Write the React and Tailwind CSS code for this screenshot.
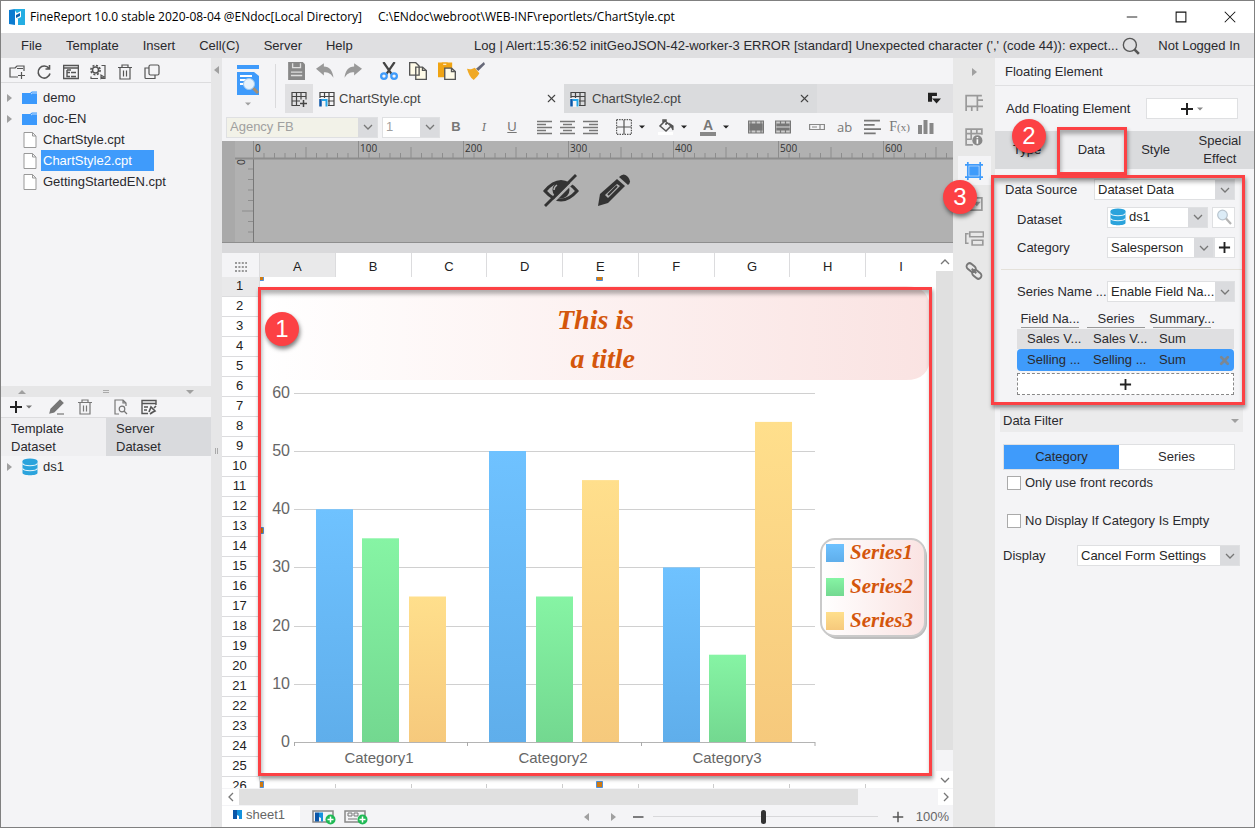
import React, { useState } from 'react';
import { FiX } from 'react-icons/fi';

const ROWS = Array.from({ length: 26 }, (_, i) => i + 1);
const COLUMNS = ['A', 'B', 'C', 'D', 'E', 'F', 'G', 'H', 'I'];
const MENU = ['File', 'Template', 'Insert', 'Cell(C)', 'Server', 'Help'];
const FILES = [
  { name: 'demo', folder: true },
  { name: 'doc-EN', folder: true },
  { name: 'ChartStyle.cpt' },
  { name: 'ChartStyle2.cpt' },
  { name: 'GettingStartedEN.cpt' },
];
const CHART = [
  { name: 'Category1', center: 119, tick: 35, bars: [[56, 40], [102, 35], [149, 25]] },
  { name: 'Category2', center: 293, tick: 208, bars: [[229, 50], [276, 25], [322, 45]] },
  { name: 'Category3', center: 467, tick: 382, bars: [[403, 30], [449, 15], [495, 55]] },
];
const SERIES = ['Series1', 'Series2', 'Series3'];
const FILLS = ['url(#blue)', 'url(#green)', 'url(#yellow)'];
const AXIS_Y = 465;

const Svg = ({ size = 16, className = '', children, ...rest }) => (
  <svg
    width={size}
    height={size}
    viewBox="0 0 16 16"
    fill="none"
    stroke="currentColor"
    strokeWidth="1.2"
    className={`shrink-0 ${className}`}
    {...rest}
  >
    {children}
  </svg>
);

const IconButton = ({ label, className = '', children }) => (
  <button type="button" aria-label={label} className={`flex shrink-0 items-center justify-center ${className}`}>
    {children}
  </button>
);

const Arrow = ({ dir = 'down', className = 'text-[#a0a0a0]' }) => {
  const paths = { down: 'M0 2h8L4 6z', up: 'M0 6h8L4 2z', right: 'M2 0v8L7 4z', left: 'M6 0v8L1 4z' };
  return (
    <svg width="8" height="8" viewBox="0 0 8 8" fill="currentColor" className={`shrink-0 ${className}`}>
      <path d={paths[dir]} />
    </svg>
  );
};

const Chevron = ({ dir = 'down' }) => {
  const paths = { down: 'M1 3l4 4 4-4', up: 'M1 7l4-4 4 4', left: 'M7 1L3 5l4 4', right: 'M3 1l4 4-4 4' };
  return (
    <svg width="10" height="10" viewBox="0 0 10 10" fill="none" stroke="#777" strokeWidth="1.3" className="shrink-0">
      <path d={paths[dir]} />
    </svg>
  );
};

const Plus = ({ size = 14 }) => (
  <svg width={size} height={size} viewBox="0 0 14 14" stroke="#222" strokeWidth="2" className="shrink-0">
    <path d="M7 1v12M1 7h12" />
  </svg>
);

const Database = () => (
  <svg width="16" height="18" viewBox="0 0 16 18" className="shrink-0">
    <path d="M0.500 3v12c0 3 15 3 15 0V3z" fill="#2ba3dc" />
    <ellipse cx="8" cy="3" rx="7.500" ry="2.600" fill="#2ba3dc" />
    <path d="M0.500 5.500c1 3 14 3 15 0M0.500 10.500c1 3 14 3 15 0" fill="none" stroke="#e6f5fb" strokeWidth="1.2" />
  </svg>
);

const Logo = ({ size = 18 }) => (
  <svg width={size} height={size} viewBox="0 0 18 18" className="shrink-0">
    <path d="M1 2l6-1v16l-6-1z" fill="#0b7bd0" />
    <path d="M6 1h11v16h-7v-6H7V9l3-2z" fill="#25aee3" />
    <path d="M7 6l6-3v6l-6 3z" fill="#fff" />
    <path d="M8 7l4-2v3l-4 2z" fill="#0d5fae" />
    <path d="M7 12l3-1v6H7z" fill="#fff" />
  </svg>
);

const SheetIcon = ({ plus }) => (
  <Svg stroke="#444">
    <path d="M1 1.500h14v13H1zM1 5.500h14M1 10h14M5.500 1.500v13M10 1.500v13" />
    {plus ? (
      <>
        <path d="M9 8.500h7v7.500H9z" fill="#e0e0e2" stroke="none" />
        <path d="M12.500 9v7M9 12.500h7" strokeWidth="1.5" />
      </>
    ) : (
      <>
        <path d="M0 7h9v9H0z" fill="#f4f4f6" stroke="none" />
        <path d="M1.500 8v7.500" stroke="#0a56a8" strokeWidth="2.500" />
        <path d="M3 9h4.500v6.500" stroke="#25a6e8" strokeWidth="2" />
      </>
    )}
  </Svg>
);

const MagnifierIcon = ({ size = 16, lens = '#dcecf7' }) => (
  <Svg size={size}>
    <circle cx="6.500" cy="6" r="4.800" fill={lens} stroke="#b8c4ce" />
    <path d="M10 9.500l5 5.500" stroke="#b4b4b4" strokeWidth="2.200" />
  </Svg>
);

const Select = ({ id, value, className = '', textClass = 'bg-white text-[#262626]', icon }) => (
  <div className={`flex h-[21px] min-w-0 border border-[#dfe0e2] ${className}`}>
    <div className={`flex min-w-0 flex-1 items-center ${textClass}`}>
      {icon}
      <select id={id} aria-label={id} className="h-full w-full min-w-0 appearance-none bg-transparent pl-[3px] outline-none">
        <option>{value}</option>
      </select>
    </div>
    <span className="flex w-[19px] shrink-0 items-center justify-center bg-[#dadbde]">
      <Chevron />
    </span>
  </div>
);

const Badge = ({ n, className }) => (
  <span
    className={`absolute z-20 flex h-[34px] w-[34px] items-center justify-center rounded-full bg-[#fc4144] text-2xl text-white shadow-[1px_3px_4px_rgba(0,0,0,0.5)] ${className}`}
  >
    {n}
  </span>
);

const Callout = ({ className }) => (
  <span
    className={`pointer-events-none absolute z-10 border-[3px] border-[#fc4144] shadow-[1px_3px_4px_rgba(0,0,0,0.4),inset_1px_4px_4px_rgba(0,0,0,0.3)] ${className}`}
  />
);

const Separator = () => <span className="h-4 w-px shrink-0 bg-[#d8d8da]" />;

const TitleBar = () => (
  <header className="flex h-8 shrink-0 items-center bg-white pl-[7px] text-black">
    <Logo />
    <h1 className="ml-1 font-['Open_Sans',sans-serif] text-[12px] whitespace-nowrap">
      FineReport 10.0 stable 2020-08-04 @ENdoc[Local Directory]
    </h1>
    <span className="ml-4 font-['Open_Sans',sans-serif] text-[12px] whitespace-nowrap">
      C:\ENdoc\webroot\WEB-INF\reportlets/ChartStyle.cpt
    </span>
    <div className="ml-auto flex h-full">
      <IconButton label="Minimize" className="w-[49px]">
        <Svg size={12} stroke="#111"><path d="M1 8h14" /></Svg>
      </IconButton>
      <IconButton label="Maximize" className="w-[49px]">
        <Svg size={12} stroke="#111" strokeWidth="1.400"><path d="M1.500 1.500h13v13h-13z" /></Svg>
      </IconButton>
      <IconButton label="Close" className="w-[49px]">
        <Svg size={12} stroke="#111" strokeWidth="1.400"><path d="M1 1l14 14M15 1L1 15" /></Svg>
      </IconButton>
    </div>
  </header>
);

const MenuBar = () => (
  <nav className="flex h-[25px] shrink-0 items-center bg-[#dfdfe1] pr-3.5 pl-5">
    <div className="flex gap-6">
      {MENU.map((item) => (
        <button type="button" key={item}>{item}</button>
      ))}
    </div>
    <span className="ml-auto whitespace-nowrap">
      Log | Alert:15:36:52 initGeoJSON-42-worker-3 ERROR [standard] Unexpected character (',' (code 44)): expect...
    </span>
    <IconButton label="Search" className="ml-1 w-[18px]">
      <Svg size={18} stroke="#555"><circle cx="7" cy="7" r="5.800" /><path d="M11 11l4 4" strokeWidth="2.400" /></Svg>
    </IconButton>
    <button type="button" className="ml-[18px] whitespace-nowrap">Not Logged In</button>
  </nav>
);

const LeftPanel = () => {
  const [selected, setSelected] = useState('ChartStyle2.cpt');

  return (
    <aside className="flex w-[210px] shrink-0 flex-col bg-[#f4f4f6]">
      <div className="flex h-[25px] shrink-0 items-center gap-[11px] border-b border-[#dcdcde] pt-1 pl-2 text-[#555]">
        <IconButton label="New folder">
          <Svg><path d="M9 13H1V4h5M6 4l2-2h7v5M8 4.500h6M12.500 8v7M9 11.500h7" /></Svg>
        </IconButton>
        <IconButton label="Refresh">
          <Svg><path d="M13 4.500A6 6 0 1 0 14 9.500M13.500 1v4h-4" strokeWidth="1.600" /></Svg>
        </IconButton>
        <IconButton label="Locate">
          <Svg><path d="M.6 1.500h14.800v13H.6zM.6 4h14.800M4 6v6.500h3M4 8.500h3M8 8.500h5M8 12.500h5M4 6h4" strokeWidth="1.400" /></Svg>
        </IconButton>
        <IconButton label="Configure">
          <Svg>
            <circle cx="5.500" cy="6" r="4.600" strokeWidth="1.600" strokeDasharray="2 1.600" />
            <circle cx="5.500" cy="6" r="3" strokeWidth="1.500" />
            <path d="M11.500 1.500h3.500v13h-3.500M1 12.500v2h7M11 11v3.500l3-1.500z" />
          </Svg>
        </IconButton>
        <IconButton label="Delete">
          <Svg><path d="M1 3.500h14M5 3V1h6v2M3 4v11h10V4M6.500 6.500v6M9.500 6.500v6" /></Svg>
        </IconButton>
        <IconButton label="Copy">
          <Svg><rect x="5" y="1" width="10" height="10" rx="1.500" /><path d="M5 4H1v9.500q0 1 1 1h9v-3.500" /></Svg>
        </IconButton>
      </div>
      <ul className="flex flex-1 flex-col pt-1">
        {FILES.map((file) => (
          <li key={file.name} className="flex h-[21px] items-center">
            <span className="flex w-[21px] pl-1">{file.folder && <Arrow dir="right" />}</span>
            {file.folder ? (
              <Svg stroke="none" fill="#3b99fc"><path d="M0 3h8l2-1.500h5v12.500H0z" /><path d="M9 4l1.500-1H15" stroke="#fff" strokeWidth=".7" fill="none" /></Svg>
            ) : (
              <Svg stroke="#999" fill="#fff" strokeWidth="1"><path d="M2 .5h8.500L14 4v11.500H2zM10.500.5V4H14" /></Svg>
            )}
            <button
              type="button"
              onClick={() => setSelected(file.name)}
              className={`ml-[3px] h-full pl-[2px] text-left ${selected === file.name ? 'w-[113px] bg-[#3f9bfb] text-white' : ''}`}
            >
              {file.name}
            </button>
          </li>
        ))}
      </ul>
      <div className="flex h-[11px] shrink-0 items-center justify-between bg-[#e6e6e7] px-[17px]">
        <Arrow dir="up" />
        <span className="h-[3px] w-1.5 border-y border-[#aaa]" />
        <Arrow />
      </div>
      <div className="flex h-[21px] shrink-0 items-center border-b border-[#dcdcde] pl-2 text-[#777]">
        <IconButton label="Add dataset"><Plus /><Arrow className="ml-0.5 scale-75 text-[#777]" /></IconButton>
        <span className="mx-2"><Separator /></span>
        <IconButton label="Edit dataset">
          <Svg><path d="M1 14l1-4L11 1l3 3-9 9z" fill="currentColor" /><path d="M8 15h7" /></Svg>
        </IconButton>
        <IconButton label="Delete dataset" className="ml-3">
          <Svg><path d="M1 3.500h14M5 3V1h6v2M3 4v11h10V4M6.500 6.500v6M9.500 6.500v6" /></Svg>
        </IconButton>
        <span className="mx-2.5"><Separator /></span>
        <IconButton label="Preview dataset">
          <Svg><path d="M6 15H2V1h8l3 3v3M10 1v3h3" /><circle cx="9" cy="10" r="2.800" /><path d="M11 12l3 3" /></Svg>
        </IconButton>
        <IconButton label="Connections" className="ml-3 text-[#555]">
          <Svg><path d="M7 14.500H1v-13h14V6M1 4.500h14M3 8h4M3 11h3" strokeWidth="1.400" /><path d="M8 13l2-5 4 4-4 2M13 9l2-2M9 15l3-2" strokeWidth="1.600" /></Svg>
        </IconButton>
      </div>
      <div className="grid h-[38px] shrink-0 grid-cols-2 text-left leading-[18px]">
        <button type="button" className="bg-[#efeff1] pt-0.5 pl-2.5 text-left">Template<br />Dataset</button>
        <button type="button" className="bg-[#d9dadd] pt-0.5 pl-2.5 text-left">Server<br />Dataset</button>
      </div>
      <div className="flex h-[371px] shrink-0">
        <div className="flex h-[21px] items-center">
          <span className="flex w-[21px] pl-1"><Arrow dir="right" /></span>
          <Database />
          <span className="ml-[5px]">ds1</span>
        </div>
      </div>
    </aside>
  );
};

const Toolbar = () => (
  <div className="flex h-[55px] shrink-0 bg-[#f4f4f6]">
    <div className="flex w-[63px] shrink-0 items-center pl-[13px]">
      <IconButton label="Preview" className="flex-col gap-1">
        <svg width="26" height="32" viewBox="0 0 26 32">
          <path d="M2 1h22v4H2zM2 8h17l5 4v19H2z" fill="#3f9bfb" />
          <path d="M5 12h12M5 16h8M5 20h5" stroke="#fff" strokeWidth="2" />
          <path d="M18 24l5 5" stroke="#a98f70" strokeWidth="3" />
          <circle cx="14" cy="20" r="5.500" fill="#e7f2fb" stroke="#a4cbee" />
        </svg>
        <Arrow className="scale-75 text-[#a0a0a0]" />
      </IconButton>
      <span className="ml-3.5 h-11 w-px bg-[#dadadc]" />
    </div>
    <div className="flex min-w-0 flex-1 flex-col">
      <div className="flex h-[26px] items-center pl-0.5">
        <IconButton label="Save" className="text-[#888]">
          <Svg size={18} stroke="none" fill="currentColor"><path d="M1 0h13l2 2v14H1z" /><path d="M5 1v4h7V1M3.500 9h10M3.500 12h10" stroke="#ddd" fill="none" /></Svg>
        </IconButton>
        <IconButton label="Undo" className="ml-[11px] text-[#999]">
          <Svg size={18} stroke="none" fill="currentColor"><path d="M0 6l7-5v3c5 0 8 4 8.500 10C13 10 11 9 7 9v3z" /></Svg>
        </IconButton>
        <IconButton label="Redo" className="ml-2.5 text-[#999]">
          <Svg size={18} stroke="none" fill="currentColor"><path d="M16 6L9 1v3C4 4 1 8 .5 14 3 10 5 9 9 9v3z" /></Svg>
        </IconButton>
        <span className="mx-[9px]"><Separator /></span>
        <IconButton label="Cut">
          <Svg size={18} stroke="#444"><path d="M3 0l7.500 11M13 0L5.500 11" strokeWidth="2" /><circle cx="3.500" cy="12.500" r="2.500" stroke="#3f9bfb" strokeWidth="2" /><circle cx="12.500" cy="12.500" r="2.500" stroke="#3f9bfb" strokeWidth="2" /></Svg>
        </IconButton>
        <IconButton label="Copy" className="ml-[11px]">
          <Svg size={18} stroke="#555" fill="#fffbe8"><path d="M.6.6H6l3 3v8H.6zM6 4.500h6l3.400 3v8H6z" /><path d="M12 4.500v3h3" fill="none" /></Svg>
        </IconButton>
        <IconButton label="Paste" className="ml-[11px]">
          <Svg size={18} stroke="#f0a413"><path d="M0 1h12v12H0z" fill="#f0a413" /><path d="M4 1h4v2H4z" fill="#fff" /><path d="M6 5.500h6l3.400 3v7H6z" fill="#fffbe8" stroke="#555" /><path d="M12 5.500v3h3" stroke="#555" /></Svg>
        </IconButton>
        <IconButton label="Format painter" className="ml-[11px]">
          <Svg size={18} stroke="none"><path d="M15 0l1 2-6 6-2-2z" fill="#666878" /><path d="M0 6c3 1 5 0 7-1l4 5c-1 2-3 4-5 6C3 14 1 10 0 6z" fill="#f0a925" /></Svg>
        </IconButton>
        <span className="mx-[9px]"><Separator /></span>
      </div>
      <div className="flex h-[29px] bg-[#e0e0e2]">
        <IconButton label="New template" className="w-7"><SheetIcon plus /></IconButton>
        <div className="flex min-w-0 flex-[239] items-center bg-[#f4f4f6] pr-1.5 pl-1.5 text-[#444]">
          <SheetIcon />
          <button type="button" className="ml-1">ChartStyle.cpt</button>
          <IconButton label="Close tab" className="ml-auto"><FiX size={13} /></IconButton>
        </div>
        <div className="flex min-w-0 flex-[241] items-center bg-[#dadbdd] pr-1.5 pl-1.5 text-[#444]">
          <SheetIcon />
          <button type="button" className="ml-1.5">ChartStyle2.cpt</button>
          <IconButton label="Close tab" className="ml-auto"><FiX size={13} /></IconButton>
        </div>
        <div className="flex flex-[124] items-center justify-end pr-3">
          <IconButton label="Tab list">
            <Svg size={13} stroke="none" fill="#222"><path d="M0 1h11v4H5v7H0zM5 8h11l-5.500 6z" /></Svg>
          </IconButton>
        </div>
      </div>
    </div>
  </div>
);

const Align = ({ d }) => <Svg stroke="#777" strokeWidth="1.500"><path d={d} /></Svg>;

const FormatBar = () => (
  <div className="flex h-7 shrink-0 items-center bg-[#f4f4f6] pl-1 text-[#777]">
    <Select id="Font" value="Agency FB" textClass="bg-[#f2f2e8] text-[#a0a0a0]" className="w-[152px]" />
    <Select id="Size" value="1" textClass="bg-white text-[#a0a0a0]" className="ml-1 w-[58px]" />
    <IconButton label="Bold" className="ml-2 w-4 font-bold">B</IconButton>
    <IconButton label="Italic" className="ml-3 w-4 font-serif italic">I</IconButton>
    <IconButton label="Underline" className="ml-3 w-4 underline">U</IconButton>
    <span className="ml-2"><Separator /></span>
    <div className="ml-[9px] flex gap-[7px]">
      <IconButton label="Align left"><Align d="M0 2.500h15M0 5.500h9M0 8.500h15M0 11.500h9M0 14.500h15" /></IconButton>
      <IconButton label="Align center"><Align d="M0 2.500h15M3 5.500h9M0 8.500h15M3 11.500h9M0 14.500h15" /></IconButton>
      <IconButton label="Align right"><Align d="M0 2.500h15M6 5.500h9M0 8.500h15M6 11.500h9M0 14.500h15" /></IconButton>
    </div>
    <span className="ml-[9px]"><Separator /></span>
    <IconButton label="Border" className="ml-2 gap-1.5">
      <Svg stroke="#555"><path d="M.6.6h14.800v14.800H.6z" strokeDasharray="1.500 1" /><path d="M8 1v14M1 8h14" /></Svg>
      <Arrow className="scale-75 text-[#222]" />
    </IconButton>
    <IconButton label="Fill colour" className="ml-3 gap-1.5">
      <Svg stroke="#555"><path d="M0 13h15v3H0z" fill="#fff" stroke="none" /><path d="M7 2l6 5-5 5-6-5zM5 4V1h3v5" strokeWidth="1.500" /><path d="M12 5l3 2v4z" fill="#444" /></Svg>
      <Arrow className="scale-75 text-[#222]" />
    </IconButton>
    <IconButton label="Text colour" className="ml-3 gap-1.5">
      <span className="w-4 border-b-4 border-[#888] text-center text-sm leading-[13px] font-bold">A</span>
      <Arrow className="scale-75 text-[#222]" />
    </IconButton>
    <span className="ml-2.5"><Separator /></span>
    <IconButton label="Merge cells" className="ml-2">
      <Svg><path d="M.6 2h14.800v12H.6z" fill="#ccc" /><path d="M2 5h12v6H2z" fill="#777" /><path d="M8 2v3M8 11v3M3 2v12M13 2v12" /></Svg>
    </IconButton>
    <IconButton label="Split cells" className="ml-[11px]">
      <Svg><path d="M.6 2h14.800v12H.6z" fill="#ccc" /><path d="M2 5h12v6H2z" fill="#777" /><path d="M5.500 2v12M10.500 2v12" /><path d="M1 8h14" stroke="#ccc" /></Svg>
    </IconButton>
    <span className="ml-2"><Separator /></span>
    <IconButton label="Widget" className="ml-2.5"><Svg stroke="#888"><path d="M.6 5.500h14.800v5H.6zM3 8h5M11 6v4" /></Svg></IconButton>
    <button type="button" className="ml-3 font-['Open_Sans',sans-serif] text-[13px]">ab</button>
    <IconButton label="Rich text" className="ml-3"><Svg size={17} strokeWidth="1.500"><path d="M0 1.500h15M0 5.500h10M0 9.500h16M0 13.500h11" /></Svg></IconButton>
    <button type="button" className="ml-2 font-['Liberation_Serif',serif] text-sm">F<span className="text-[11px]">(x)</span></button>
    <IconButton label="Chart" className="ml-2"><Svg stroke="none" fill="#888"><path d="M0 6h4v9H0zM5.500 1h4v14h-4zM11.500 4h4v11h-4z" /></Svg></IconButton>
  </div>
);

const Ruler = () => (
  <section className="relative h-[102px] shrink-0 overflow-hidden border-b border-[#8e8e8e] bg-[#b1b1b1]">
    <svg className="h-full w-full" stroke="#8d8d8d">
      <rect width="13" height="102" fill="#a9a9a9" stroke="none" />
      <path d="M31.500 0v102" stroke="#777" />
      <path d="M31 17.500h1300M13 17.500h18" strokeWidth="2" />
      {Array.from({ length: 70 }, (_, i) => {
        const x = 31.5 + i * 10.5;
        const height = i % 10 === 0 ? 17 : i % 5 === 0 ? 11 : 5;
        return <path key={i} d={`M${x} ${17 - height}V17`} />;
      })}
      {[1, 2, 3, 4, 5, 6, 7].map((i) => (
        <path key={i} d={`M${i === 5 ? 20 : 26} ${17.5 + i * 10.5}H31`} />
      ))}
      <g fill="#333" stroke="none" className="font-['Open_Sans',sans-serif] text-[10px]">
        {[0, 1, 2, 3, 4, 5, 6].map((i) => (
          <text key={i} x={33 + i * 105} y="11">{i * 100}</text>
        ))}
        <text transform="rotate(-90)" x="-24" y="23">0</text>
      </g>
    </svg>
    <div className="absolute top-8 left-[321px] flex gap-4">
      <IconButton label="Hide">
        <svg width="36" height="36" viewBox="0 0 36 36" fill="none" stroke="#333">
          <path d="M2 18Q18 -1 34 18Q18 36 2 18z" strokeWidth="3" />
          <circle cx="18" cy="17" r="8.500" fill="#333" stroke="none" />
          <path d="M11 17q0-3 3-5" stroke="#b1b1b1" strokeWidth="1.500" />
          <path d="M5 34L35 4" stroke="#b1b1b1" strokeWidth="2.500" />
          <path d="M2 33L33 2" strokeWidth="2.800" />
        </svg>
      </IconButton>
      <IconButton label="Edit">
        <svg width="36" height="36" viewBox="0 0 36 36">
          <path d="M3 33l2-12L22 6l8 7-17 17z" fill="#333" />
          <path d="M10 22L22 11l3 2-12 12z" fill="#b1b1b1" />
          <path d="M13 22l9-9" stroke="#333" strokeWidth="2" />
          <path d="M24 4q5-5 9 0t0 8z" fill="#333" />
        </svg>
      </IconButton>
    </div>
  </section>
);

const Gradient = ({ id, from, to, flat }) => (
  <linearGradient id={id} x2={flat ? 1 : 0} y2={flat ? 0 : 1}>
    <stop stopColor={from} />
    <stop offset="1" stopColor={to} />
  </linearGradient>
);

const Chart = () => (
  <svg viewBox="0 0 676 511" preserveAspectRatio="xMinYMin" className="h-full w-full">
    <defs>
      <Gradient id="blue" from="#6fc2ff" to="#5faeeb" />
      <Gradient id="green" from="#86f4a4" to="#73d890" />
      <Gradient id="yellow" from="#ffdf8c" to="#f6c97c" />
      <Gradient id="pink" from="#ffffff" to="#fae3e2" flat />
    </defs>
    <path d="M0 9H646q24 0 24 24V79q0 24-24 24H0z" fill="url(#pink)" />
    <g className="font-['Liberation_Serif',serif] text-[28px] font-bold italic" fill="#d4560c" textAnchor="end">
      <text x="374" y="52">This is</text>
      <text x="375" y="91">a title</text>
    </g>
    {[0, 10, 20, 30, 40, 50, 60].map((v) => {
      const y = Math.round(AXIS_Y - v * 5.82);
      return (
        <g key={v}>
          <path d={`M34 ${y + 0.5}H555`} stroke={v ? '#d0d0d0' : '#b4b4b4'} />
          <text x="30" y={y + 5} textAnchor="end" fill="#666" className="text-[16px]">{v}</text>
        </g>
      );
    })}
    {CHART.map((cat) => (
      <g key={cat.name}>
        <path d={`M${cat.tick - 0.5} ${AXIS_Y}v4`} stroke="#aaa" />
        {cat.bars.map(([x, value], i) => (
          <rect key={x} x={x} y={AXIS_Y - value * 5.82} width="37" height={value * 5.82} fill={FILLS[i]} />
        ))}
        <text x={cat.center} y="486" textAnchor="middle" fill="#666" className="text-[15px]">{cat.name}</text>
      </g>
    ))}
    <path d={`M555 ${AXIS_Y}v4`} stroke="#aaa" />
    <rect x="562" y="263" width="105" height="99" rx="16" fill="#bdbdbd" />
    <rect x="561" y="262" width="104" height="97" rx="14" fill="url(#pink)" stroke="#cacaca" strokeWidth="2" />
    {SERIES.map((name, i) => (
      <g key={name}>
        <rect x="566" y={267 + i * 34} width="18" height="18" fill={FILLS[i]} />
        <text x="590" y={282 + i * 34} fill="#d4560c" className="font-['Liberation_Serif',serif] text-[21px] font-bold italic">{name}</text>
      </g>
    ))}
    <path d="M75.500 507v4M151.500 507v4M226.500 507v4M302.500 507v4M378.500 507v4M453.500 507v4M529.500 507v4M605.500 507v4" stroke="#ccc" />
    <g fill="#cf7a12" stroke="#4f90dc">
      <path d="M-2 -1h5.500v4.500h-5.500zM336.500 -.5h6v4h-6zM-2 250.500h5.500v6h-5.500zM-2 504.500h5.500v6h-5.500zM336.500 504.500h6v6h-6z" />
    </g>
  </svg>
);

const Sheet = () => (
  <section className="flex min-h-0 flex-1 bg-white">
    <div className="flex min-w-0 flex-1 flex-col">
      <div className="flex h-6 shrink-0 text-[#222]">
        <div className="flex w-[38px] shrink-0 items-center justify-center border-r border-[#dcdcde] bg-[#f4f4f6] pt-1">
          <svg width="12" height="10" viewBox="0 0 12 10" stroke="#999" strokeWidth="2" strokeDasharray="2 1.400">
            <path d="M0 1h12M0 5h12M0 9h12" />
          </svg>
        </div>
        {COLUMNS.map((c) => (
          <div
            key={c}
            className={`flex items-center justify-center pt-1 ${c === 'I' ? 'flex-[71]' : 'flex-[76] border-r border-[#dcdcde]'} ${c === 'A' ? 'bg-[#e9e9ea]' : ''}`}
          >
            {c}
          </div>
        ))}
      </div>
      <div className="flex min-h-0 flex-1">
        <div className="w-[38px] shrink-0 overflow-hidden">
          {ROWS.map((r) => (
            <div key={r} className={`h-5 border-r border-b border-[#dcdcde] pr-0.5 text-center leading-[18px] text-[#222] ${r === 1 ? 'bg-[#e9e9ea]' : ''}`}>
              {r}
            </div>
          ))}
        </div>
        <div className="relative min-w-0 flex-1">
          <Chart />
          <Callout className="top-2.5 right-1 bottom-3 -left-0.5" />
          <Badge n="1" className="top-[35px] left-[5px]" />
        </div>
      </div>
    </div>
    <div className="flex w-[17px] shrink-0 flex-col bg-[#f4f4f6]">
      <IconButton label="Scroll up" className="h-[18px] bg-white"><Chevron dir="up" /></IconButton>
      <div className="flex-[480] bg-[#e0e0e0]" />
      <div className="flex-[21]" />
      <IconButton label="Scroll down" className="h-[17px] bg-white"><Chevron /></IconButton>
    </div>
  </section>
);

const AddSheetIcon = ({ logo }) => (
  <svg width="24" height="16" viewBox="0 0 24 16" className="shrink-0">
    <path d="M1 2h20v11H1z" fill="#f4f4f6" stroke="#888" strokeWidth="1.500" />
    {logo ? (
      <>
        <path d="M3 3.500h4v9H3z" fill="#0b56a8" />
        <path d="M7 3.500h4v9H9V9L7 8z" fill="#1592dd" />
      </>
    ) : (
      <path d="M4 4h4v3H4zM10 4h4v3h-4zM4 10h9" fill="none" stroke="#777" />
    )}
    <circle cx="18.500" cy="10.500" r="5" fill="#1fb954" />
    <path d="M18.500 7.500v6M15.500 10.500h6" stroke="#fff" strokeWidth="1.500" />
  </svg>
);

const SheetFooter = () => {
  const [zoom, setZoom] = useState(100);

  return (
    <footer className="shrink-0 bg-[#f4f4f6]">
      <div className="flex h-[18px] border-y border-[#f4f4f6]">
        <IconButton label="Scroll left" className="w-[17px] bg-white"><Chevron dir="left" /></IconButton>
        <div className="flex-[619] bg-[#e0e0e0]" />
        <div className="flex-[80]" />
        <IconButton label="Scroll right" className="w-[15px] bg-white"><Chevron dir="right" /></IconButton>
      </div>
      <div className="flex h-[21px] items-center text-[#666]">
        <button type="button" className="flex h-full w-[78px] items-center gap-1 bg-white pb-1 pl-[11px]">
          <svg width="9" height="9" viewBox="0 0 9 9">
            <path d="M0 0h4v9H0z" fill="#0b56a8" />
            <path d="M4 0h5v9H6V6L4 5z" fill="#1592dd" />
          </svg>
          sheet1
        </button>
        <IconButton label="Add sheet" className="ml-3"><AddSheetIcon logo /></IconButton>
        <IconButton label="Add form sheet" className="ml-2"><AddSheetIcon /></IconButton>
        <IconButton label="Previous sheet" className="ml-auto"><Arrow dir="left" /></IconButton>
        <IconButton label="Next sheet" className="ml-[18px]"><Arrow dir="right" /></IconButton>
        <IconButton label="Zoom out" className="ml-4">
          <Svg size={12} stroke="#555" strokeWidth="2"><path d="M0 8h14" /></Svg>
        </IconButton>
        <input
          type="range"
          aria-label="Zoom"
          min="2"
          max="202"
          value={zoom}
          onChange={(e) => setZoom(Number(e.target.value))}
          className="mx-2 h-3.5 w-[225px] appearance-none bg-[linear-gradient(#d8d8da,#d8d8da)] bg-[length:100%_1px] bg-center bg-no-repeat [&::-webkit-slider-thumb]:h-3.5 [&::-webkit-slider-thumb]:w-[5px] [&::-webkit-slider-thumb]:appearance-none [&::-webkit-slider-thumb]:rounded-full [&::-webkit-slider-thumb]:bg-[#333]"
        />
        <IconButton label="Zoom in" className="ml-1.5">
          <Svg size={12} stroke="#555" strokeWidth="2"><path d="M1 8h14M8 1v14" /></Svg>
        </IconButton>
        <span className="mr-1 ml-3">{zoom}%</span>
      </div>
    </footer>
  );
};

const Rail = () => (
  <nav className="relative flex w-[42px] shrink-0 flex-col items-center bg-[#e8e8e8] text-[#999]">
    <IconButton label="Collapse panel" className="h-[27px]"><Arrow dir="right" /></IconButton>
    <IconButton label="Cell element" className="h-9 w-[33px]">
      <Svg size={18} strokeWidth="1.500"><path d="M15 1.500H1V11h6M11 1v14M11 5.500h5M7 11h9M6 11v4M1 11v4" /></Svg>
    </IconButton>
    <IconButton label="Cell attributes" className="h-8 w-[33px]">
      <Svg size={18} strokeWidth="1.500"><path d="M7 15H1V1h14v5M1 5h14M1 10h5M5.500 1v9M10.500 1v4" /><circle cx="11" cy="11" r="4.500" fill="#888" stroke="none" /><path d="M11 10v4M11 8v1" stroke="#fff" /></Svg>
    </IconButton>
    <IconButton label="Floating element" className="mt-[3px] h-[29px] w-[33px] bg-[#f4f4f6] text-[#3f9bfb]">
      <Svg size={18} strokeWidth="1.500"><path d="M0 2.500h16M0 13.500h16M2.500 0v16M13.500 0v16" /><path d="M4.500 4.500h7v7h-7z" fill="currentColor" /></Svg>
    </IconButton>
    <IconButton label="Widget settings" className="h-[38px] w-[33px]">
      <Svg size={18} strokeWidth="1.500"><path d="M1 2.500h14v11H1z" /><path d="M7 6h7l-3.500 4z" fill="currentColor" stroke="none" /></Svg>
    </IconButton>
    <IconButton label="Conditional attributes" className="h-[30px] w-[33px]">
      <Svg size={19} strokeWidth="1.400"><path d="M3 4H.6v8H3M4 2.500h11.500v4H4zM6 9.500h9v4H6z" /></Svg>
    </IconButton>
    <IconButton label="Hyperlink" className="h-9 w-[33px] text-[#777]">
      <Svg size={18} strokeWidth="1.700">
        <rect x="-4.500" y="-2.700" width="9" height="5.400" rx="2.700" transform="translate(5.500 5) rotate(40)" />
        <rect x="-4.500" y="-2.700" width="9" height="5.400" rx="2.700" transform="translate(10.500 11) rotate(40)" />
        <path d="M6 6l4 4" />
      </Svg>
    </IconButton>
    <Badge n="3" className="top-[122px] -left-2.5" />
  </nav>
);

const Cells = ({ values, action }) => (
  <>
    {values.map((v, i) => (
      <td key={i} className="pl-2.5">{v}</td>
    ))}
    <td className="text-center">{action}</td>
  </>
);

const RightPanel = () => {
  const [filter, setFilter] = useState('Category');
  const [front, setFront] = useState(false);
  const [hideEmpty, setHideEmpty] = useState(false);

  return (
    <aside className="relative w-[259px] shrink-0 bg-[#f4f4f6]">
      <h2 className="flex h-7 items-center border-b border-[#e0e0e2] pl-2.5">Floating Element</h2>
      <div className="flex h-[45px] items-center justify-between pr-4 pl-[11px]">
        <span>Add Floating Element</span>
        <IconButton label="Add floating element" className="h-[21px] w-[92px] gap-0.5 border border-[#dfe0e2] bg-white">
          <Plus />
          <Arrow className="scale-75 text-[#888]" />
        </IconButton>
      </div>
      <div className="relative">
        <div className="grid h-[38px] grid-cols-4 bg-[#dadbdd] pr-0.5 leading-[18px]">
          <button type="button">Type</button>
          <button type="button" className="bg-[#efeff1]">Data</button>
          <button type="button">Style</button>
          <button type="button">Special Effect</button>
        </div>
        <Callout className="-top-1 -bottom-1.5 left-[62px] w-[70px]" />
        <Badge n="2" className="-top-3 left-[17px]" />
      </div>
      <div className="relative px-2.5 pt-2.5 pr-[19px] pb-2.5">
        <Callout className="top-1.5 right-[9px] bottom-0 -left-1" />
        <div className="flex items-center justify-between">
          <label htmlFor="Data Source">Data Source</label>
          <Select id="Data Source" value="Dataset Data" className="w-[141px]" />
        </div>
        <div className="mt-[5px] flex items-center pl-3">
          <label htmlFor="Dataset" className="w-[90px] pt-1.5">Dataset</label>
          <Select
            id="Dataset"
            value="ds1"
            icon={<span className="pl-0.5"><Database /></span>}
            className="w-[101px]"
          />
          <IconButton label="Preview data" className="ml-auto h-[21px] w-[23px] border border-[#dfe0e2] bg-white">
            <MagnifierIcon />
          </IconButton>
        </div>
        <div className="mt-2 flex items-center pl-3">
          <label htmlFor="Category" className="w-[90px]">Category</label>
          <Select id="Category" value="Salesperson" className="flex-1" />
          <IconButton label="Add category" className="h-[21px] w-[21px] border border-[#dfe0e2] bg-white"><Plus size={13} /></IconButton>
        </div>
        <hr className="mt-[11px] -mr-2 -ml-1 border-[#e4e1da]" />
        <div className="mt-[11px] flex items-center pl-3">
          <label htmlFor="Series Name" className="w-[90px] whitespace-nowrap">Series Name ...</label>
          <Select id="Series Name" value="Enable Field Na..." className="flex-1" />
        </div>
        <table className="mt-[7px] ml-3 w-[217px] table-fixed border-separate border-spacing-0">
          <thead>
            <tr className="h-5">
              {['Field Na...', 'Series', 'Summary...'].map((h) => (
                <th key={h} className="w-[66px] px-1 font-normal whitespace-nowrap">
                  <span className="flex h-[18px] items-center justify-center border-b border-[#999]">{h}</span>
                </th>
              ))}
              <th aria-label="Actions" />
            </tr>
          </thead>
          <tbody>
            <tr className="h-5 bg-[#dfdfe1]">
              <Cells values={['Sales V...', 'Sales V...', 'Sum']} />
            </tr>
            <tr className="h-[22px] whitespace-nowrap [&>td]:bg-[#3f9bfb] [&>td:first-child]:rounded-l [&>td:last-child]:rounded-r">
              <Cells
                values={['Selling ...', 'Selling ...', 'Sum']}
                action={<FiX size={13} strokeWidth={5} className="mx-auto text-[#7c8793]" />}
              />
            </tr>
          </tbody>
        </table>
        <IconButton label="Add field" className="mt-0.5 ml-3 h-[22px] w-[217px] border border-dashed border-[#888] bg-white">
          <Plus size={13} />
        </IconButton>
      </div>
      <div className="mt-1 mr-[11px] ml-[5px] flex h-[23px] items-center justify-between bg-[#ebebec] pr-1 pl-[3px]">
        <h3>Data Filter</h3>
        <Arrow />
      </div>
      <div className="mt-3 mr-[19px] ml-2 grid h-[26px] grid-cols-2 border border-[#dfe0e2]">
        {['Category', 'Series'].map((name) => (
          <button
            type="button"
            key={name}
            onClick={() => setFilter(name)}
            className={filter === name ? 'bg-[#3f9bfb]' : 'bg-white'}
          >
            {name}
          </button>
        ))}
      </div>
      <label className="mt-1 ml-3 flex h-[18px] items-center gap-1">
        <input
          type="checkbox"
          checked={front}
          onChange={(e) => setFront(e.target.checked)}
          className="h-3.5 w-3.5 appearance-none border border-[#aaa] bg-white checked:bg-[#3f9bfb]"
        />
        Only use front records
      </label>
      <label className="mt-5 ml-3 flex h-[18px] items-center gap-1">
        <input
          type="checkbox"
          checked={hideEmpty}
          onChange={(e) => setHideEmpty(e.target.checked)}
          className="h-3.5 w-3.5 appearance-none border border-[#aaa] bg-white checked:bg-[#3f9bfb]"
        />
        No Display If Category Is Empty
      </label>
      <div className="mt-[15px] flex items-center justify-between pr-3.5 pl-2">
        <label htmlFor="Display">Display</label>
        <Select id="Display" value="Cancel Form Settings" className="w-[163px]" />
      </div>
    </aside>
  );
};

const App = () => (
  <div className="flex h-screen flex-col overflow-hidden border border-[#808080] bg-[#f4f4f6] font-['Liberation_Sans',Arial,sans-serif] text-[13px] leading-[18px] text-[#2a2a2e]">
    <TitleBar />
    <MenuBar />
    <div className="flex min-h-0 flex-1">
      <LeftPanel />
      <div className="flex w-[11px] shrink-0 flex-col items-center justify-between bg-[#e6e6e7] pt-2">
        <Arrow dir="left" />
        <span className="h-1.5 w-[3px] border-x border-[#aaa]" />
        <span />
      </div>
      <main className="flex min-w-0 flex-1 flex-col">
        <Toolbar />
        <FormatBar />
        <Ruler />
        <div className="h-2.5 shrink-0 bg-[#d9d9db]" />
        <Sheet />
        <SheetFooter />
      </main>
      <Rail />
      <RightPanel />
    </div>
  </div>
);

export default App;
